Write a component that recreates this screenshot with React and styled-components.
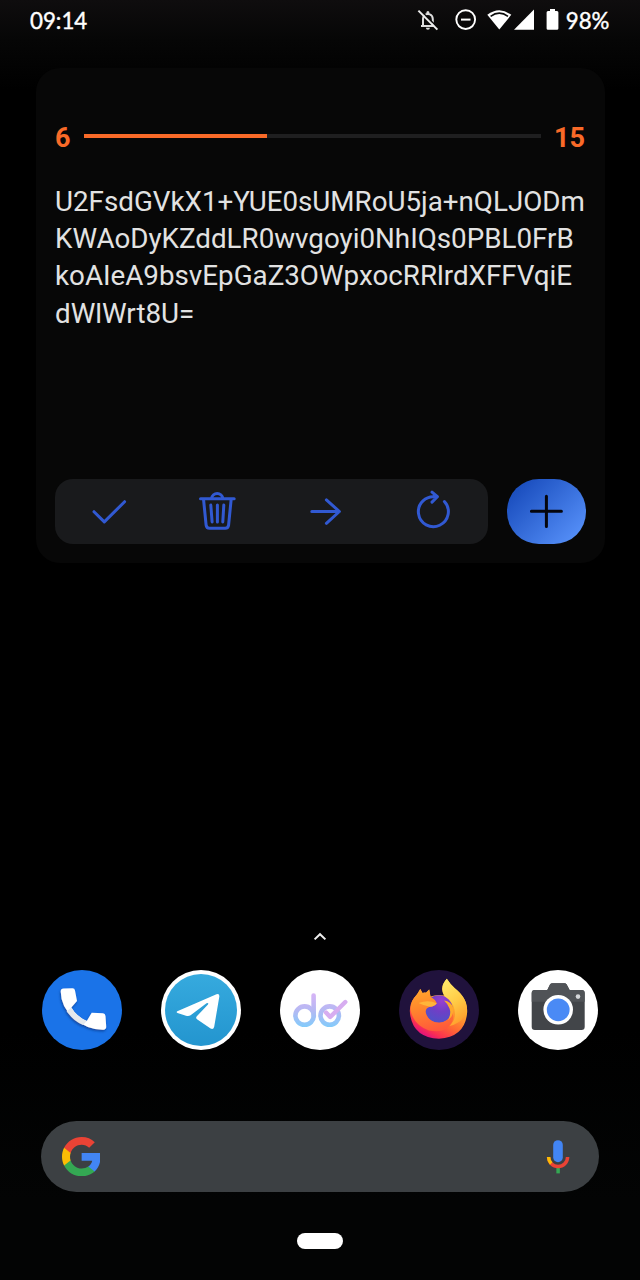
import React from 'react';
import styled, { createGlobalStyle } from 'styled-components';

const GlobalStyle = createGlobalStyle`
  * {
    box-sizing: border-box;
  }

  body {
    margin: 0;
    background: #000;
  }

  svg {
    display: block;
    flex-shrink: 0;
  }
`;

const Screen = styled.div`
  display: flex;
  flex-direction: column;
  width: 640px;
  height: 1280px;
  overflow: hidden;
  background: linear-gradient(#0f0d0e 0, #060606 40px, #000 90px, #000 1030px, #030404 1200px);
  font-family: Roboto, sans-serif;
`;

const StatusBar = styled.header`
  display: flex;
  align-items: center;
  justify-content: space-between;
  height: 68px;
  padding: 0 30.5px 28px 30px;
  color: #fff;
  font-family: Lato, sans-serif;
  font-size: 22.3px;
  -webkit-text-stroke: 0.4px #fff;
`;

const StatusIcons = styled.div`
  display: flex;
  align-items: center;
`;

const StatusIcon = styled.svg`
  width: ${({ $w }) => $w}px;
  height: 22px;
  margin-right: ${({ $gap }) => $gap}px;
`;

const Widget = styled.section`
  display: flex;
  flex-direction: column;
  height: 495px;
  margin: 0 35px 0 36px;
  padding: 52px 19px 19px;
  border-radius: 24px;
  background: #070707;
`;

const Progress = styled.div`
  display: flex;
  align-items: center;
  justify-content: space-between;
  height: 34px;
  padding-right: 1px;
`;

const Count = styled.span`
  padding-top: 2px;
  color: #f96a28;
  font-size: 27px;
  font-weight: 700;
  line-height: 34px;
`;

const Track = styled.div`
  width: 457px;
  height: 4px;
  margin-bottom: 3px;
  background: #1f1f20;
`;

const TrackFill = styled.div`
  height: 100%;
  background: #f96a28;
`;

const TaskText = styled.p`
  flex: 1;
  margin: 28.5px 0 0;
  color: #e2e2e2;
  font-size: 27.75px;
  line-height: 37.4px;
  word-break: break-all;
`;

const Actions = styled.div`
  display: flex;
  justify-content: space-between;
  height: 65px;
`;

const Toolbar = styled.div`
  display: grid;
  grid-template-columns: repeat(4, 1fr);
  width: 433px;
  border-radius: 18px;
  background: #191a1c;
`;

const ActionButton = styled.button`
  display: flex;
  align-items: center;
  justify-content: center;
  padding: 0 0 1px;
  border: 0;
  background: none;
  color: #3159d2;
`;

const AddButton = styled(ActionButton)`
  width: 79px;
  border-radius: 32px;
  background: linear-gradient(135deg, #1c50c0 15%, #558ff8 90%);
  color: #05060c;
`;

const ActionIcon = styled.svg`
  width: 40px;
  height: 40px;
  fill: none;
  stroke: currentColor;
  stroke-width: 3;
  stroke-linecap: round;
  stroke-linejoin: round;
  overflow: visible;
`;

const Spacer = styled.div`
  flex: 1;
`;

const DrawerHandle = styled.div`
  display: flex;
  justify-content: center;
  height: 38px;
`;

const Dock = styled.nav`
  display: flex;
  justify-content: space-between;
  height: 80px;
  margin: 0 42px 71px;
`;

const AppIcon = styled.svg`
  width: 80px;
  height: 80px;
  border-radius: 50%;
  background: ${({ $bg }) => $bg};
`;

const SearchBar = styled.div`
  display: flex;
  align-items: center;
  justify-content: space-between;
  height: 71px;
  margin: 0 41px;
  padding: 0 29px 0 20.5px;
  border-radius: 36px;
  background: #3c4043;
`;

const NavBar = styled.footer`
  display: flex;
  justify-content: center;
  height: 88px;
  padding-top: 41px;
`;

const HomePill = styled.div`
  width: 46px;
  height: 16px;
  border-radius: 8px;
  background: #fff;
`;

const done = 6;
const total = 15;

const task =
  'U2FsdGVkX1+YUE0sUMRoU5ja+nQLJODmKWAoDyKZddLR0wvgoyi0NhIQs0PBL0FrBkoAIeA9bsvEpGaZ3OWpxocRRlrdXFFVqiEdWlWrt8U=';

const PhoneIcon = () => (
  <AppIcon viewBox="0 0 80 80" $bg="#1a73e8">
    <defs>
      <filter id="phoneShadow" x="-20%" y="-20%" width="150%" height="150%">
        <feDropShadow dx="-0.6" dy="1.6" stdDeviation="1.3" floodColor="#0b3b8c" floodOpacity="0.8" />
      </filter>
    </defs>
    <g filter="url(#phoneShadow)">
      <path
        d="M18.7 21.5Q18.7 18.7 21.5 18.5L30.5 18.2Q32.7 18.3 33 20.5L35 31L29.3 37.5Q34.5 46.5 44.8 51L49.7 42.7L61 43.3Q63.2 43.5 63.5 46L64.2 56.5Q64.3 59.3 61.5 59.7Q45 60 31.5 48Q19 37 18.7 21.5Z"
        fill="#fff"
      />
      <path d="M29.3 37.5Q34.5 46.5 44.8 51L41.2 55Q31.5 51 24.7 41.5Z" fill="#e4e8ec" />
    </g>
  </AppIcon>
);

const TelegramIcon = () => (
  <AppIcon viewBox="0 0 80 80" $bg="#fff">
    <defs>
      <linearGradient id="tg" x1="0" y1="0" x2="0" y2="1">
        <stop offset="0" stopColor="#36aade" />
        <stop offset="1" stopColor="#2395cf" />
      </linearGradient>
    </defs>
    <circle cx="40" cy="40" r="36" fill="url(#tg)" />
    <path
      d="M16.3 41.2L55.5 24.3Q58.7 23.3 58.3 26.8L53.2 56.8Q52.4 60 49.6 58.6L36 49.3Q34.4 48 35.8 46.3L47 34.5Q48 32.6 45.5 33.2L29.6 45.3Q27.5 46.6 25 45.7L16.5 43Q14.8 42.2 16.3 41.2Z"
      fill="#fff"
    />
  </AppIcon>
);

const DoIcon = () => (
  <AppIcon viewBox="0 0 80 80" $bg="#fff">
    <defs>
      <linearGradient id="doFill" gradientUnits="userSpaceOnUse" x1="0" y1="24" x2="0" y2="57">
        <stop offset="0" stopColor="#d6b4f6" />
        <stop offset="0.5" stopColor="#b5b9f3" />
        <stop offset="1" stopColor="#83cbfb" />
      </linearGradient>
    </defs>
    <g fill="none" stroke="url(#doFill)" strokeWidth="4.6" strokeLinecap="round">
      <circle cx="24.6" cy="45.6" r="9.2" />
      <path d="M33.6 25.5L33.7 46" />
      <circle cx="49.7" cy="45.6" r="9.2" />
    </g>
    <path
      d="M46 42.5L50.2 47L65.3 32"
      fill="none"
      stroke="#d7adf0"
      strokeWidth="4.4"
      strokeLinecap="round"
      strokeLinejoin="round"
    />
  </AppIcon>
);

const FirefoxIcon = () => (
  <AppIcon viewBox="0 0 80 80" $bg="#20123c">
    <defs>
      <linearGradient id="ffBody" x1="0.85" y1="0.1" x2="0.35" y2="1">
        <stop offset="0" stopColor="#ffe04a" />
        <stop offset="0.35" stopColor="#ffac2e" />
        <stop offset="0.66" stopColor="#ff6a32" />
        <stop offset="0.88" stopColor="#fb3150" />
        <stop offset="1" stopColor="#e2127c" />
      </linearGradient>
      <linearGradient id="ffFlame" x1="0.3" y1="0" x2="0.7" y2="1">
        <stop offset="0" stopColor="#ffe868" />
        <stop offset="0.5" stopColor="#ffcb45" />
        <stop offset="1" stopColor="#ff9a2a" />
      </linearGradient>
      <linearGradient id="ffHead" x1="0.2" y1="0" x2="0.4" y2="1">
        <stop offset="0" stopColor="#ffa62c" />
        <stop offset="0.4" stopColor="#ff8a2c" />
        <stop offset="1" stopColor="#ff5a3a" />
      </linearGradient>
      <radialGradient id="ffGlobe" cx="0.6" cy="0.2" r="0.8">
        <stop offset="0" stopColor="#9a3fd0" />
        <stop offset="0.5" stopColor="#6f3fc6" />
        <stop offset="1" stopColor="#5150c8" />
      </radialGradient>
    </defs>
    <path
      d="M21.3 19L23.5 23Q25.5 22.4 27 22.7L30.2 19.5L31.5 26.5Q38 24 45 25.5Q40 17 47.8 8.8Q51 14 56 18.5Q60.5 22.5 61.5 24Q68.6 31 68.2 42Q66.5 67 40 68.8Q12.5 67.5 10.8 41Q11 33 15 28Q19 23.5 21.3 19Z"
      fill="url(#ffBody)"
    />
    <circle cx="39.8" cy="39" r="13.8" fill="url(#ffGlobe)" />
    <path
      d="M47.8 8.8Q40 18 46 26.5Q52 30.5 54.5 36Q59 49 50 56Q66 53 67.8 38Q66.5 29 61.5 23.6Q60 21.5 55.5 18Q51 14 47.8 8.8Z"
      fill="url(#ffFlame)"
    />
    <path
      d="M21.3 19L23.5 23Q25.5 22.4 27 22.7L30.2 19.5L31.5 27Q36.5 29.5 37.8 33.2Q35.5 36.5 31 36.8Q26.8 37.8 26.6 42Q28.5 52 40.5 52.8Q50.5 51.5 53.2 42Q55.5 47 53 52Q47 64 30 60.5Q14.5 55 11.5 40Q11.5 33 15 28Q19 23.5 21.3 19Z"
      fill="url(#ffHead)"
    />
    <path d="M19.5 33Q29 29.5 37.8 33.2Q35.5 36.5 31 36.8Q25 35.8 19.5 33Z" fill="#ffb53a" />
    <path d="M45 30.5Q52 31 54.2 38Q55 46 49 50Q52.5 44 50.5 38.5Q48.5 33.5 45 30.5Z" fill="#ffa92d" />
  </AppIcon>
);

const CameraIcon = () => (
  <AppIcon viewBox="0 0 80 80" $bg="#fff">
    <path
      d="M29.3 20L32 14.6Q32.8 13.3 34.5 13.3H46.2Q48 13.3 48.7 14.6L51.6 20H63.5Q66.7 20 66.7 23.2V56.8Q66.7 60 63.5 60H16.9Q13.7 60 13.7 56.8V23.2Q13.7 20 16.9 20Z"
      fill="#424549"
    />
    <path
      d="M29.3 20L32 14.6Q32.8 13.3 34.5 13.3H46.2Q48 13.3 48.7 14.6L51.6 20H63.5Q66.7 20 66.7 23.2V31.7H13.7V23.2Q13.7 20 16.9 20Z"
      fill="#505357"
    />
    <circle cx="40.2" cy="39.8" r="14.8" fill="#fff" />
    <circle cx="40.2" cy="39.8" r="11.4" fill="#4a8af5" />
    <circle cx="60" cy="26.6" r="2.3" fill="#d5d7da" />
  </AppIcon>
);

const App = () => (
  <>
    <GlobalStyle />
    <Screen>
      <StatusBar>
        <span>09:14</span>
        <StatusIcons>
          <StatusIcon viewBox="0 0 22 22" $w={22} $gap={16}>
            <path
              d="M4 17H17.5M6 17V10Q6.2 6.4 9 5.4Q10.8 4.8 12.8 5.4Q15.6 6.4 15.8 10V16"
              fill="none"
              stroke="#ddd"
              strokeWidth="2"
            />
            <path d="M9.4 5.5V3.4a1.5 1.5 0 0 1 3 0V5.5ZM8.9 18.8h4a2 2 0 0 1-4 0Z" fill="#ddd" />
            <path d="M2.8 0.8L21.8 19.8" stroke="#0a0a0a" strokeWidth="1.6" />
            <path d="M1.4 1.6L20.4 20.6" stroke="#eee" strokeWidth="2" />
          </StatusIcon>
          <StatusIcon viewBox="0 0 22 22" $w={22} $gap={10}>
            <circle cx="10.7" cy="10.6" r="9.4" fill="none" stroke="#fff" strokeWidth="1.9" />
            <path d="M6 10.6H15.5" stroke="#fff" strokeWidth="2" />
          </StatusIcon>
          <StatusIcon viewBox="0 0 25 22" $w={25} $gap={2}>
            <path d="M0.3 5.8Q12.3 -3.2 24.3 5.8L12.3 20.6Z" fill="#fff" />
            <path d="M3.6 7.3Q12.3 1 21 7.3" fill="none" stroke="#0a0a0a" strokeWidth="1.6" />
          </StatusIcon>
          <StatusIcon viewBox="0 0 21 22" $w={21} $gap={11}>
            <path d="M20 0.6V20.8H0Z" fill="#fff" />
          </StatusIcon>
          <StatusIcon viewBox="0 0 13 22" $w={13} $gap={7}>
            <path d="M4 0H9V2H11Q12.4 2 12.4 3.5V19.4Q12.4 20.8 11 20.8H2Q0.6 20.8 0.6 19.4V3.5Q0.6 2 2 2H4Z" fill="#fff" />
          </StatusIcon>
          <span>98%</span>
        </StatusIcons>
      </StatusBar>

      <Widget>
        <Progress>
          <Count>{done}</Count>
          <Track>
            <TrackFill style={{ width: `${(done / total) * 100}%` }} />
          </Track>
          <Count>{total}</Count>
        </Progress>
        <TaskText>{task}</TaskText>
        <Actions>
          <Toolbar>
            <ActionButton aria-label="Done">
              <ActionIcon viewBox="0 -0.5 40 40">
                <path d="M5 20.2L15.3 30.4L35.6 10.2" />
              </ActionIcon>
            </ActionButton>
            <ActionButton aria-label="Delete">
              <ActionIcon viewBox="0 -0.5 40 40">
                <path d="M3.5 7.2H37.2M14.5 6.8A5.8 5.8 0 0 1 25.9 6.8M6.5 7.5L9.1 33.5Q9.5 36.8 12.5 36.8H28.2Q31.2 36.8 31.6 33.5L34.2 7.5" />
                <path d="M13.8 13.6L15.1 30.4M20.4 13.6V30.4M26.8 13.6L25.8 30.4" />
              </ActionIcon>
            </ActionButton>
            <ActionButton aria-label="Next">
              <ActionIcon viewBox="0.4 -0.5 40 40">
                <path d="M6.2 20H33.6M20.8 8.4L33.8 20L20.8 31.8" />
              </ActionIcon>
            </ActionButton>
            <ActionButton aria-label="Repeat">
              <ActionIcon viewBox="0 -0.5 40 40">
                <path d="M30.4 10A15 15 0 1 1 22 5.4M18 0.6L23.4 5.2L18 10.6" />
              </ActionIcon>
            </ActionButton>
          </Toolbar>
          <AddButton aria-label="Add">
            <ActionIcon viewBox="0 -0.5 40 40">
              <path d="M19.4 4.8V35M4.4 19.8H34.4" />
            </ActionIcon>
          </AddButton>
        </Actions>
      </Widget>

      <Spacer />

      <DrawerHandle>
        <svg width="14" height="10" viewBox="0 0 14 10" fill="none" stroke="#eee" strokeWidth="2">
          <path d="M1.6 7.4L7 2.2L12.4 7.4" />
        </svg>
      </DrawerHandle>
      <Dock>
        <PhoneIcon />
        <TelegramIcon />
        <DoIcon />
        <FirefoxIcon />
        <CameraIcon />
      </Dock>

      <SearchBar>
        <svg width="38.5" height="39.3" viewBox="1 1 21.56 22">
          <path fill="#4285f4" d="M22.56 12.25c0-.78-.07-1.53-.2-2.25H12v4.26h5.92c-.26 1.37-1.04 2.53-2.21 3.31v2.77h3.57c2.08-1.92 3.28-4.74 3.28-8.09z" />
          <path fill="#34a853" d="M12 23c2.97 0 5.46-.98 7.28-2.66l-3.57-2.77c-.98.66-2.23 1.06-3.71 1.06-2.86 0-5.29-1.93-6.16-4.53H2.18v2.84C3.99 20.53 7.7 23 12 23z" />
          <path fill="#fbbc05" d="M5.84 14.09c-.22-.66-.35-1.36-.35-2.09s.13-1.43.35-2.09V7.07H2.18C1.43 8.55 1 10.22 1 12s.43 3.45 1.18 4.93l2.85-2.22.81-.62z" />
          <path fill="#ea4335" d="M12 5.38c1.62 0 3.06.56 4.21 1.64l3.15-3.15C17.45 2.09 14.97 1 12 1 7.7 1 3.99 3.47 2.18 7.07l3.66 2.84c.87-2.6 3.3-4.53 6.16-4.53z" />
        </svg>
        <svg width="24" height="35" viewBox="0 0 24 35" fill="none" strokeWidth="3.5">
          <rect x="7.2" y="1.2" width="9.6" height="22" rx="4.8" fill="#4285f4" />
          <path d="M12.1 28V34.4" stroke="#34a853" />
          <path d="M2.6 18A9.5 9.5 0 0 0 21.6 18" stroke="#ea4335" />
          <path d="M2.6 18A9.5 9.5 0 0 0 5.2 24.5" stroke="#fbbc05" />
        </svg>
      </SearchBar>

      <NavBar>
        <HomePill />
      </NavBar>
    </Screen>
  </>
);

export default App;
